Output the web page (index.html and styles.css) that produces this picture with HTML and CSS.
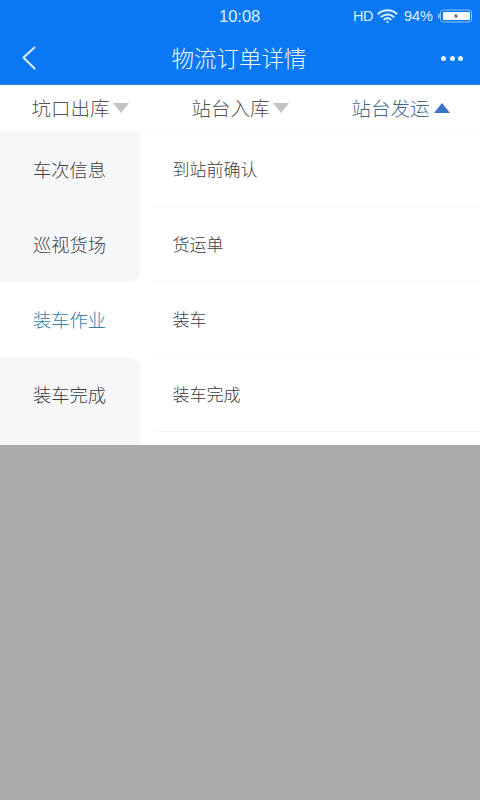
FILE: index.html
```html
<!DOCTYPE html>
<html lang="zh-CN">
<head>
<meta charset="utf-8">
<title>物流订单详情</title>
<link rel="stylesheet" href="styles.css">
</head>
<body>
<div class="app">
  <header class="header">
    <div class="status">
      <span class="time">10:08</span>
      <div class="status-right">
        <span class="hd">HD</span>
        <svg class="wifi" width="21" height="16" viewBox="0 0 22 16" fill="none" stroke="#dff1ff" stroke-width="2" stroke-linecap="round">
          <path d="M1.5 5.6C6.8 .8 15.2 .8 20.5 5.6"/>
          <path d="M4.6 8.8C8.2 5.6 13.8 5.6 17.4 8.8"/>
          <path d="M7.6 11.7C9.6 10.2 12.4 10.2 14.4 11.7"/>
          <circle cx="11" cy="14.2" r="1.2" fill="#dff1ff" stroke="none"/>
        </svg>
        <span class="pct">94%</span>
        <svg class="battery" width="34" height="14" viewBox="0 0 34 14">
          <rect x="0" y="4.5" width="1.6" height="5" rx=".8" fill="#9fd0fb"/>
          <rect x="2.5" y="1" width="31" height="12" rx="2.5" fill="none" stroke="#8cc6fa" stroke-width="1"/>
          <rect x="5" y="3" width="27" height="8" rx="1" fill="#fff"/>
          <path d="M18.8 4.2 16 7.4h2l-.8 2.4 2.8-3.2h-2z" fill="#222"/>
        </svg>
      </div>
    </div>
    <div class="nav">
      <svg class="back" width="16" height="26" viewBox="0 0 16 26" fill="none" stroke="#dff1ff" stroke-width="2" stroke-linecap="round" stroke-linejoin="round">
        <path d="M13.5 2.5 2.5 12.5l11 11"/>
      </svg>
      <h1 class="title">物流订单详情</h1>
      <div class="more"><i></i><i></i><i></i></div>
    </div>
  </header>

  <nav class="tabs">
    <div class="tab tab-a"><span>坑口出库</span><b class="tri tri-down"></b></div>
    <div class="tab tab-b"><span>站台入库</span><b class="tri tri-down"></b></div>
    <div class="tab tab-c active"><span>站台发运</span><b class="tri tri-up"></b></div>
  </nav>

  <main class="panel">
    <aside class="side">
      <div class="side-group group-top">
        <div class="side-item">车次信息</div>
        <div class="side-item">巡视货场</div>
      </div>
      <div class="side-item current">装车作业</div>
      <div class="side-group group-bottom">
        <div class="side-item">装车完成</div>
      </div>
    </aside>
    <ul class="list">
      <li>到站前确认</li>
      <li>货运单</li>
      <li>装车</li>
      <li>装车完成</li>
    </ul>
  </main>

  <div class="mask"></div>
</div>
</body>
</html>
```
FILE: styles.css
```css
* { box-sizing: border-box; margin: 0; padding: 0; }
html, body { width: 480px; height: 800px; overflow: hidden; }
body { font-family: "Noto Sans CJK SC", "Noto Sans", sans-serif; background: #fff; }
.app { display: flex; flex-direction: column; width: 480px; height: 800px; }

.header { height: 85px; background: #0a78f4; border-bottom: 1px solid #2f86e0; color: #dff1ff; flex: none; }
.status { position: relative; height: 32px; display: flex; align-items: center; justify-content: flex-end; padding-right: 8px; }
.time { position: absolute; left: 219px; top: 6px; font-family: "Liberation Sans", sans-serif; font-size: 16.5px; line-height: 20px; }
.status-right { display: flex; align-items: center; font-family: "Liberation Sans", sans-serif; font-size: 14.5px; }
.hd { width: 24px; letter-spacing: -.5px; }
.wifi { margin-right: 6px; }
.pct { margin-right: 5px; }

.nav { height: 52px; display: flex; align-items: center; justify-content: space-between; padding: 0 17px 0 21px; position: relative; }
.title { position: absolute; left: 171.5px; top: 8px; font-size: 22.5px; line-height: 34px; font-weight: 300; white-space: nowrap; color: #eef8ff; }
.more { display: flex; gap: 3.5px; }
.more i { width: 5px; height: 5px; border-radius: 50%; background: #e8f5ff; }

.tabs { height: 47px; display: flex; align-items: center; flex: none; color: #555; font-size: 19.5px; line-height: 46px; font-weight: 300; border-bottom: 1px solid #f6f6f6; padding-left: 31.5px; }
.tab { display: flex; align-items: center; white-space: nowrap; }
.tab-a { width: 160px; }
.tab-b { width: 160px; }
.tab.active { color: #44688e; }
.tri { display: block; width: 0; height: 0; margin-left: 3.5px; border-left: 8px solid transparent; border-right: 8px solid transparent; }
.tri-down { border-top: 10px solid #c2c2c2; }
.tri-up { border-bottom: 10px solid #3a72c8; margin-left: 4.5px; }

.panel { height: 313px; flex: none; display: flex; }
.side { width: 140px; flex: none; display: flex; flex-direction: column; }
.side-group { background: #f6f7f9; }
.group-top { border-bottom-right-radius: 10px; }
.group-bottom { flex: 1; border-top-right-radius: 10px; }
.side-item { height: 75px; display: flex; align-items: center; padding: 0 0 2px 33px; font-size: 18.3px; font-weight: 300; color: #3d3d3d; white-space: nowrap; }
.side-item.current { color: #2f80ad; }

.list { flex: 1; list-style: none; padding-left: 13px; }
.list li { height: 75px; display: flex; align-items: center; padding: 0 0 1px 19.5px; font-size: 17px; font-weight: 300; color: #3d3d3d; border-bottom: 1px solid #f6f6f6; }

.mask { flex: 1; background: #ababab; }
```
